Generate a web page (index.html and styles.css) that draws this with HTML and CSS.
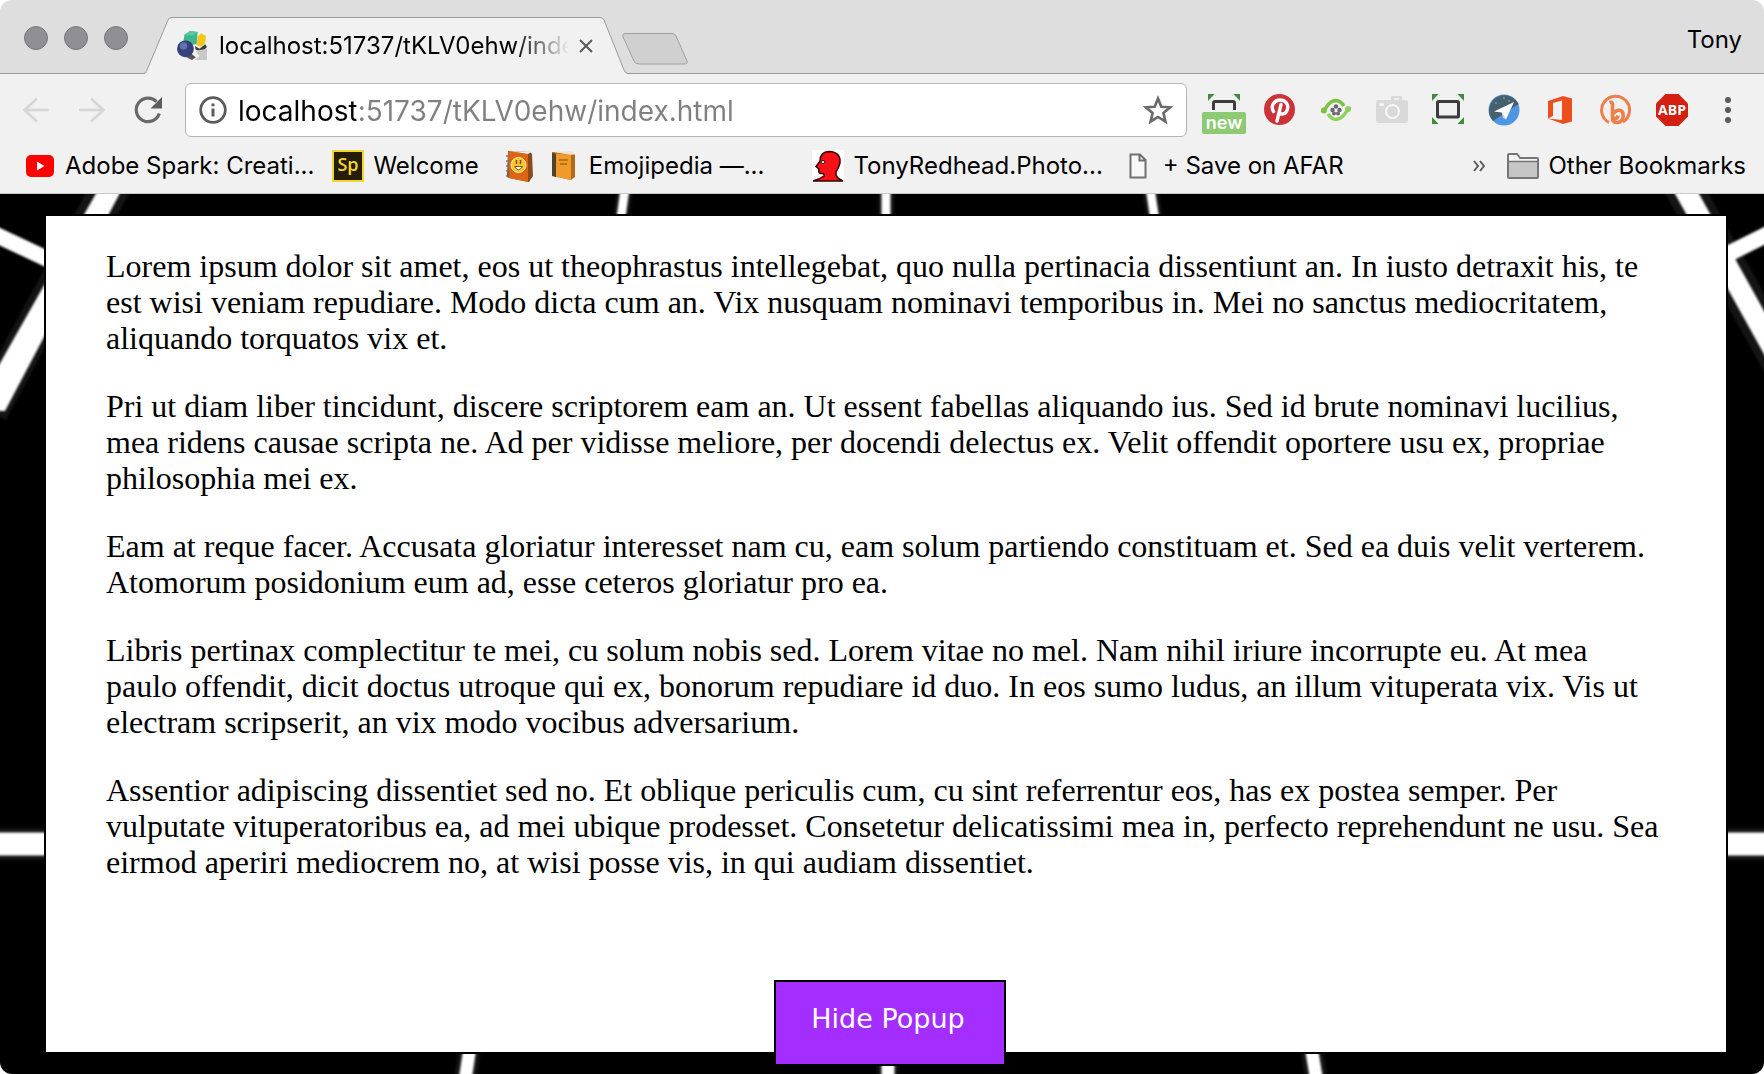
FILE: index.html
```html
<!DOCTYPE html>
<html lang="en">
<head>
<meta charset="utf-8">
<title>localhost:51737/tKLV0ehw/index.html</title>
<link rel="stylesheet" href="styles.css">
</head>
<body>
<div class="window">
  <header class="tabstrip">
    <div class="lights"><span class="light"></span><span class="light"></span><span class="light"></span></div>
    <div class="tab">
      <svg class="tab-shape" viewBox="0 0 484 57" preserveAspectRatio="none" aria-hidden="true">
        <path d="M0 57 Q2 56 3 53 L24 3 Q25 .5 28 .5 H456 Q459 .5 460 3 L480 53 Q481 56 484 57Z" fill="#f1f1f1"/>
        <path d="M0 56.5 Q2 56 3 53 L24 3 Q25 .5 28 .5 H456 Q459 .5 460 3 L480 53 Q481 56 484 56.5" fill="none" stroke="#9b9b9b"/>
      </svg>
      <svg class="favicon" viewBox="0 0 32 32" aria-hidden="true">
        <path d="M8 4 14 0 22 1 21 14 10 15 7 10Z" fill="#3fb68b"/><path d="M8 4 14 0 22 1 17 5Z" fill="#57caa0"/>
        <path d="M21 15 22 6 26 2 28 4 31 5 30 13 25 17Z" fill="#f5c518"/>
        <path d="M19 16 24 19 30 14 32 17 27 22 20 20Z" fill="#3c3c3c"/>
        <path d="M20 21 32 19V31L19 31 24 27Z" fill="#c9c9c9"/><path d="M10 28 15 24 20 28 16 31Z" fill="#555"/>
        <circle cx="9" cy="19" r="9" fill="#34407f"/><circle cx="7" cy="16" r="4" fill="#6571ac"/>
      </svg>
      <span class="tab-title">localhost:51737/tKLV0ehw/index.html</span>
      <button class="tab-close" aria-label="Close tab"><svg viewBox="0 0 14 14"><path d="M1 1 13 13M13 1 1 13" stroke="#5a5a5a" stroke-width="2"/></svg></button>
    </div>
    <button class="new-tab" aria-label="New tab"><svg viewBox="0 0 66 32"><path d="M4 .5H50Q53 .5 54 3L65 28Q66 31 62 31H17Q13 31 12 28L1 4Q0 .5 4 .5Z" fill="#d0d0d0" stroke="#9f9f9f"/></svg></button>
    <button class="profile">Tony</button>
  </header>

  <div class="toolbar">
    <nav class="icons" aria-label="Navigation">
      <button aria-label="Back"><svg viewBox="0 0 32 32"><path d="M28.500 16H5M17 4.500 4.500 16 17 27.500" fill="none" stroke="#d6d6d6" stroke-width="2.600"/></svg></button>
      <button aria-label="Forward"><svg viewBox="0 0 32 32"><path d="M3 16H27M15 4.500 27.500 16 15 27.500" fill="none" stroke="#d6d6d6" stroke-width="2.600"/></svg></button>
      <button aria-label="Reload"><svg viewBox="0 0 32 32"><path d="M27.300 19.500A11.800 11.800 0 1 1 24.500 7.600" fill="none" stroke="#696969" stroke-width="3.200"/><path d="M30 3V14.500H18.500Z" fill="#5c5c5c"/></svg></button>
    </nav>
    <div class="omnibox">
      <svg class="info" viewBox="0 0 28 28" aria-hidden="true"><circle cx="14" cy="14" r="12.300" fill="none" stroke="#5b5b5b" stroke-width="2.800"/><path d="M14 12.500V20.500M14 7.500V10.300" stroke="#5b5b5b" stroke-width="3"/></svg>
      <input class="url" type="text" aria-label="Address" value="localhost:51737/tKLV0ehw/index.html">
      <button class="star" aria-label="Bookmark this page"><svg viewBox="0 0 30 30"><path d="M15 3.500 18.300 11.700 27.200 12.300 20.400 18 22.500 26.700 15 22 7.500 26.700 9.600 18 2.800 12.300 11.700 11.700Z" fill="none" stroke="#6a6a6a" stroke-width="2.600"/></svg></button>
    </div>
    <div class="icons">
      <button class="with-badge" aria-label="Full page capture">
        <svg viewBox="0 0 32 32"><path d="M0 0H6.500L0 7ZM32 0H25.500L32 7Z" fill="#3d8c3d"/><path d="M5.500 16V9Q5.500 7.500 7 7.500H25Q26.500 7.500 26.500 9V16" fill="none" stroke="#3c3c3c" stroke-width="3"/></svg>
        <span class="badge">new</span>
      </button>
      <button aria-label="Pinterest"><svg viewBox="0 0 32 32"><circle cx="15.500" cy="15.500" r="15.500" fill="#cb3339"/><path d="M9.500 17.500C6 12 10.500 6 16 6C22 6 25 11 23.200 16C21.500 20.500 17 21.500 15.300 17.700M17 10.500 13 27" fill="none" stroke="#fff" stroke-width="3.400" stroke-linecap="round"/></svg></button>
      <button aria-label="Preview"><svg viewBox="0 0 32 32"><path d="M1 16.500C7 18 6 7 15.500 6.500C20 6.500 22 9 24 12" fill="none" stroke="#7cc242" stroke-width="3.400"/><path d="M31 15C25 14 26 25 16 25.500C12 25.500 10 23 8 20" fill="none" stroke="#8fd05a" stroke-width="3.400"/><circle cx="4" cy="16.500" r="3" fill="#7cc242"/><circle cx="28" cy="15" r="3" fill="#8fd05a"/><g fill="#6d6673"><circle cx="16" cy="12.500" r="2.200"/><circle cx="12.500" cy="16" r="2.200"/><circle cx="19.500" cy="16" r="2.200"/><circle cx="14" cy="19.500" r="2"/><circle cx="18" cy="19.500" r="2"/></g></svg></button>
      <button aria-label="Screenshot"><svg viewBox="0 0 32 32"><path d="M2 6H15V3Q15 2 16 2H25Q26 2 26 3V6H30Q32 6 32 8V27Q32 29 30 29H2Q0 29 0 27V8Q0 6 2 6Z" fill="#d9d9d9"/><path d="M18 4H23V6H18Z" fill="#f1f1f1"/><circle cx="16.500" cy="17.500" r="6.500" fill="none" stroke="#f7f7f7" stroke-width="2"/><path d="M3.500 10.500H8" stroke="#f7f7f7" stroke-width="2.500"/></svg></button>
      <button aria-label="Capture area"><svg viewBox="0 0 32 32"><path d="M0 0H6.500L0 7ZM32 0H25.500L32 7ZM0 30V23L6.500 30ZM32 30V23L25.500 30Z" fill="#3d8c3d"/><rect x="5.500" y="7.500" width="21" height="15.500" rx="1" fill="none" stroke="#3c3c3c" stroke-width="3"/></svg></button>
      <button aria-label="Send page"><svg viewBox="0 0 32 32"><circle cx="16" cy="16" r="15.500" fill="#4e95e4"/><path d="M31 9.500 5 27A15.500 15.500 0 1 1 31 11Z" fill="#47606d"/><path d="M26 8 6 17.500 13.500 18.500 18 25.500Z" fill="#fff"/><path d="M13.500 18.500 15 24 18 25.500Z" fill="#c8d6e4"/><g fill="#9db3bd"><circle cx="16" cy="4" r=".8"/><circle cx="8" cy="9" r=".8"/><circle cx="21" cy="7" r=".8"/></g></svg></button>
      <button aria-label="Office"><svg viewBox="0 0 32 32"><path d="M4 7 19 2 28 4.500V27.500L19 30 4 24.500 18 26V6.500L9 9V22L4 24.500Z" fill="#eb4f1c"/></svg></button>
      <button aria-label="Bitly"><svg viewBox="0 0 32 32"><path d="M9 28.500A14 14 0 1 1 23 28" fill="none" stroke="#ee7f4b" stroke-width="3"/><path d="M9.500 8.500Q12.500 7.500 12.500 10V24.500Q12.500 28.500 17 28.500C22 28.500 24 24 23 19.500C22 15.500 17 15 13 19.500M13 24Q17 26 18 21.500" fill="none" stroke="#ee7f4b" stroke-width="3.600"/></svg></button>
      <button aria-label="Adblock Plus"><svg viewBox="0 0 32 32"><path d="M9.500 0H22.500L32 9.500V22.500L22.500 32H9.500L0 22.500V9.500Z" fill="#d32011"/><text x="16" y="21" class="abp-text" text-anchor="middle">ABP</text></svg></button>
      <button aria-label="Menu"><svg viewBox="0 0 32 32"><g fill="#5b5b5b"><circle cx="16" cy="6" r="3"/><circle cx="16" cy="16" r="3"/><circle cx="16" cy="26" r="3"/></g></svg></button>
    </div>
  </div>

  <nav class="bookmarks" aria-label="Bookmarks">
    <a class="bookmark" href="#"><svg viewBox="0 0 32 32"><rect x="2" y="5" width="28" height="22" rx="5" fill="#f00"/><path d="M13 11.500V20.500L20.500 16Z" fill="#fff"/></svg>Adobe Spark: Creati...</a>
    <a class="bookmark" href="#"><svg viewBox="0 0 32 32"><rect x="1" y="1" width="30" height="30" fill="#251d05" stroke="#f3d52c" stroke-width="2"/><text x="16" y="21" class="sp-text" text-anchor="middle">Sp</text></svg>Welcome</a>
    <a class="bookmark emoji" href="#">
      <svg viewBox="0 0 32 32"><path d="M3 1 25 2 27 4 28 26 24 32 4 28 2 27Z" fill="#8b4a1c"/><path d="M3 1 23 4V32L4 28Z" fill="#dd6415"/><path d="M4 1 26 2 23 4Z" fill="#eee"/><circle cx="13.500" cy="15" r="7.500" fill="#fbc52d" stroke="#fff1a8"/><path d="M9.500 16.500Q13.500 23 17.500 16.500Z" fill="#fff" stroke="#80501a"/><path d="M11.500 10V14M15.500 10V14" stroke="#80501a" stroke-width="1.500"/><path d="M1 6H5M1 11H5M1 16H5M1 21H5M1 26H5" stroke="#777" stroke-width="1.500"/></svg>
      <svg class="book" viewBox="0 0 24 32"><path d="M1 2 20 2 24 5V27L20 30 2 26Z" fill="#b26a18"/><path d="M1 3 20 5V30L2 26Z" fill="#f09a2b"/><path d="M1 3 5 3.500V27L1 26Z" fill="#51422c"/><path d="M2 2 20 1 24 4 20 5Z" fill="#eee3cd"/><path d="M8 10H17M9 14H16" stroke="#b06513" stroke-width="1.500"/></svg>
      Emojipedia —...</a>
    <a class="bookmark" href="#"><svg viewBox="0 0 32 32"><path d="M0 0H32V32H0Z" fill="#fff"/><path d="M1 31Q8 29 12 26Q13 23 8 23.500Q6 22 7 19L4 16.500 8 11Q8 2 17 1.500Q29 2 28 13Q27 17 24 22Q23 28 31 31Z" fill="#fb1018" stroke="#300" stroke-width="1.500"/><ellipse cx="11" cy="12" rx="2" ry="1.500" fill="#fff" stroke="#300"/></svg>TonyRedhead.Photo...</a>
    <a class="bookmark page-link" href="#"><svg class="page-icon" viewBox="0 0 18 26"><path d="M1.500 1.500H11L16.500 7V24.500H1.500ZM10.500 1.500V7.500H16.500" fill="#f8f8f8" stroke="#707070" stroke-width="2"/></svg>+ Save on AFAR</a>
    <button class="more" aria-label="More bookmarks"><svg viewBox="0 0 12 12"><path d="M1 1 5 6 1 11M7 1 11 6 7 11" fill="none" stroke="#5b5b5b" stroke-width="2"/></svg></button>
    <a class="bookmark other" href="#"><svg viewBox="0 0 32 32"><path d="M1 27V5Q1 4 2 4H10L13 8H30Q31 8 31 9V27Q31 28 30 28H2Q1 28 1 27Z" fill="#c6c6c6" stroke="#757575" stroke-width="2"/><path d="M2 5H9.500L12.500 9H30V11H2Z" fill="#f3f3f3"/><path d="M2 11.500H30" stroke="#757575" stroke-width="1.500"/></svg>Other Bookmarks</a>
  </nav>

  <main class="page">
    <svg class="rays" viewBox="0 0 1764 880" preserveAspectRatio="none" aria-hidden="true">
      <g class="halo">
        <path stroke-width="38" d="M118-20-11 217M1676-20 1787 180"/>
        <path stroke-width="32" d="M-10 650H60M1700 650H1774"/>
        <path stroke-width="16" d="M627-20 616 60M886-20V60M1148-20 1160 60"/>
        <path stroke-width="22" d="M472 840 463 900M888 840V900M1309 840 1319 900"/>
      </g>
      <g class="beam">
        <path fill="#fff" stroke="none" d="M107-20H130L5 217H-27Z"/>
        <path stroke-width="21" d="M1676-20 1787 180"/>
        <path stroke-width="16" d="M-10 38 60 71M1774 37 1718 65"/>
        <path stroke-width="23" d="M-10 650H60M1700 650H1774"/>
        <path stroke-width="9" d="M627-20 616 60M886-20V60M1148-20 1160 60"/>
        <path stroke-width="13" d="M472 840 463 900M888 840V900M1309 840 1319 900"/>
      </g>
    </svg>
    <section class="popup">
      <p>Lorem ipsum dolor sit amet, eos ut theophrastus intellegebat, quo nulla pertinacia dissentiunt an. In iusto detraxit his, te est wisi veniam repudiare. Modo dicta cum an. Vix nusquam nominavi temporibus in. Mei no sanctus mediocritatem, aliquando torquatos vix et.</p>
      <p>Pri ut diam liber tincidunt, discere scriptorem eam an. Ut essent fabellas aliquando ius. Sed id brute nominavi lucilius, mea ridens causae scripta ne. Ad per vidisse meliore, per docendi delectus ex. Velit offendit oportere usu ex, propriae philosophia mei ex.</p>
      <p>Eam at reque facer. Accusata gloriatur interesset nam cu, eam solum partiendo constituam et. Sed ea duis velit verterem. Atomorum posidonium eum ad, esse ceteros gloriatur pro ea.</p>
      <p>Libris pertinax complectitur te mei, cu solum nobis sed. Lorem vitae no mel. Nam nihil iriure incorrupte eu. At mea paulo offendit, dicit doctus utroque qui ex, bonorum repudiare id duo. In eos sumo ludus, an illum vituperata vix. Vis ut electram scripserit, an vix modo vocibus adversarium.</p>
      <p>Assentior adipiscing dissentiet sed no. Et oblique periculis cum, cu sint referrentur eos, has ex postea semper. Per vulputate vituperatoribus ea, ad mei ubique prodesset. Consetetur delicatissimi mea in, perfecto reprehendunt ne usu. Sea eirmod aperiri mediocrem no, at wisi posse vis, in qui audiam dissentiet.</p>
      <button class="hide-popup">Hide Popup</button>
    </section>
  </main>
</div>
</body>
</html>
```
FILE: styles.css
```css
* { box-sizing: border-box; }

body {
  margin: 0;
  background: #fff;
  color: #000;
  font-family: Inter, "Liberation Sans", sans-serif;
  font-size: 24px;
}

button {
  padding: 0;
  border: 0;
  background: none;
  color: inherit;
  font: inherit;
}

svg { display: block; }

.window {
  display: flex;
  flex-direction: column;
  min-height: 100vh;
  border-radius: 12px;
  overflow: hidden;
  background: #f1f1f1;
}

/* Tab strip */
.tabstrip {
  display: flex;
  align-items: flex-end;
  height: 74px;
  padding: 0 22px 0 24px;
  background: #dedede;
  border-bottom: 1px solid #9b9b9b;
}

.lights {
  display: flex;
  gap: 16px;
  align-self: flex-start;
  padding-top: 26px;
}

.light {
  width: 24px;
  height: 24px;
  border: 1px solid #77777d;
  border-radius: 50%;
  background: #8f8f95;
}

.tab {
  position: relative;
  display: flex;
  align-items: center;
  width: 484px;
  height: 57px;
  margin: 0 -6px -1px 16px;
  padding: 0 35px 0 33px;
}

.tab-shape {
  position: absolute;
  inset: 0;
  width: 100%;
  height: 100%;
}

.favicon {
  position: relative;
  flex: none;
  width: 30px;
  height: 30px;
}

.tab-title {
  position: relative;
  flex: 1;
  margin: 0 10px 0 12px;
  overflow: hidden;
  white-space: nowrap;
  mask-image: linear-gradient(to right, #000 84%, transparent);
}

.tab-close {
  position: relative;
  width: 14px;
  height: 14px;
}

.new-tab {
  width: 66px;
  height: 32px;
  margin-bottom: 8px;
}

.profile {
  align-self: center;
  margin: 6px 0 0 auto;
}

/* Toolbar */
.toolbar {
  display: flex;
  align-items: center;
  gap: 21px;
  padding: 9px 20px;
}

.icons {
  display: flex;
  gap: 24px;
}

.icons button {
  width: 32px;
  height: 32px;
}

.omnibox {
  display: flex;
  flex: 1;
  align-items: center;
  gap: 11px;
  height: 54px;
  padding: 0 13px;
  border: 1px solid #b4b4b4;
  border-radius: 6px;
  background: #fff;
}

.info {
  flex: none;
  width: 28px;
  height: 28px;
}

.url {
  flex: 1;
  min-width: 0;
  padding: 2px 0 0;
  border: 0;
  outline: 0;
  background: linear-gradient(to right, #000 118px, #808080 118px) text;
  color: transparent;
  font: inherit;
  font-size: 28px;
}

.star {
  width: 30px;
  height: 30px;
}

.with-badge { position: relative; }

.badge {
  position: absolute;
  top: 18px;
  left: -6px;
  width: 44px;
  height: 22px;
  border-radius: 2px;
  background: #8dcb72;
  color: #fff;
  font-size: 18px;
  font-weight: 600;
  line-height: 22px;
}

.abp-text {
  fill: #fff;
  font: bold 14px "Open Sans", sans-serif;
}

/* Bookmarks */
.bookmarks {
  display: flex;
  align-items: center;
  height: 48px;
  padding: 0 18px 8px 24px;
  border-bottom: 1px solid #c9c9c9;
}

.bookmark {
  display: flex;
  align-items: center;
  gap: 9px;
  margin-right: 18px;
  color: inherit;
  text-decoration: none;
  white-space: nowrap;
}

.bookmark svg {
  flex: none;
  width: 32px;
  height: 32px;
}

.emoji {
  gap: 14px;
  margin: 0 48px 0 8px;
}

.bookmark .book { width: 24px; }

.page-link {
  gap: 16px;
  margin-left: 8px;
}

.bookmark .page-icon {
  width: 18px;
  height: 26px;
}

.sp-text {
  fill: #f6d82b;
  font: 600 18px "Open Sans", sans-serif;
}

.more {
  width: 12px;
  height: 12px;
  margin: 0 22px 0 auto;
}

.other { margin-right: 0; }

/* Page */
.page {
  position: relative;
  display: flex;
  flex: 1;
  padding: 20px 36px 20px 44px;
  background: #000;
}

.rays {
  position: absolute;
  inset: 0;
  width: 100%;
  height: 100%;
  fill: none;
}

.halo {
  stroke: #141414;
  filter: blur(1px);
}

.beam {
  stroke: #fff;
  filter: blur(1px);
}

.popup {
  position: relative;
  flex: 1;
  padding: 0 60px 140px;
  border: 2px solid #000;
  background: #fff;
  font: 32px/36px "Liberation Serif", serif;
}

.popup p { margin: 32px 0; }

.hide-popup {
  position: absolute;
  bottom: -14px;
  left: 50%;
  width: 232px;
  height: 86px;
  margin-left: -112px;
  padding: 0 4px 10px 0;
  border: 2px solid #000;
  background: #a42eff;
  color: #fff;
  font: 27px "DejaVu Sans", sans-serif;
}
```
